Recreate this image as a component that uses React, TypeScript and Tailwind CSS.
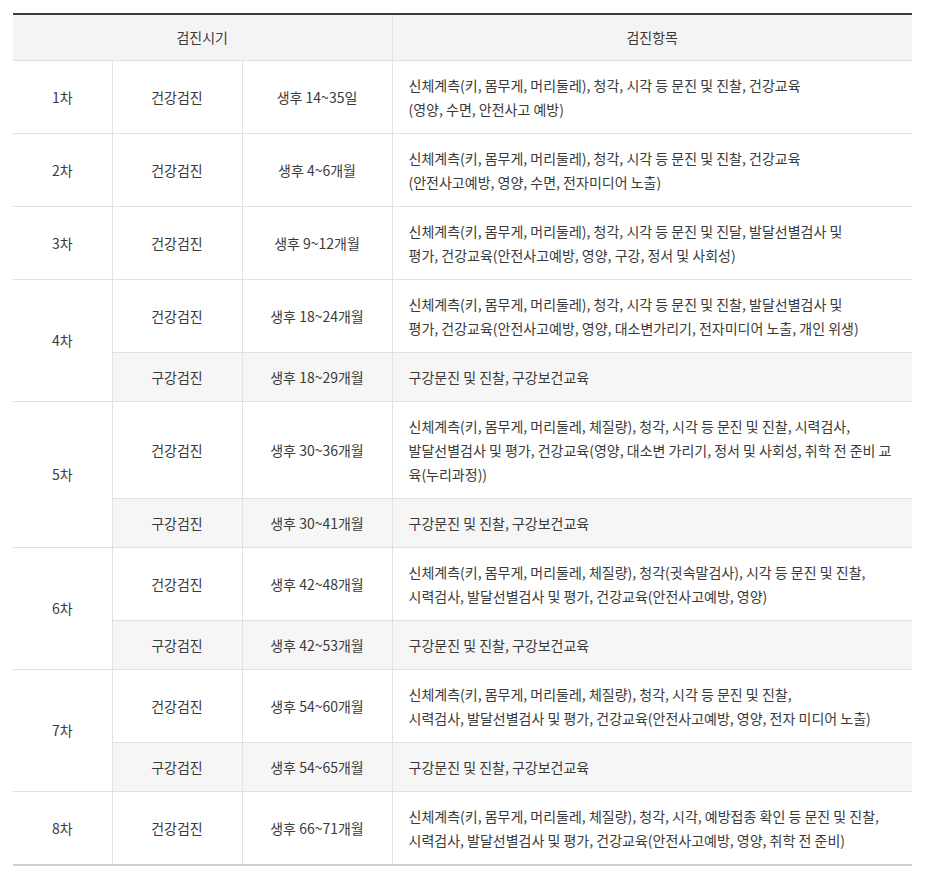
import React from "react";

const font = { fontFamily: '"Noto Sans CJK KR", "Noto Sans", sans-serif' };

type Sub = { kind: string; age: string; lines: string[]; gray?: boolean };
type Row = { no: string; subs: Sub[] };

const rows: Row[] = [
  { no: "1차", subs: [{ kind: "건강검진", age: "생후 14~35일", lines: ["신체계측(키, 몸무게, 머리둘레), 청각, 시각 등 문진 및 진찰, 건강교육", "(영양, 수면, 안전사고 예방)"] }] },
  { no: "2차", subs: [{ kind: "건강검진", age: "생후 4~6개월", lines: ["신체계측(키, 몸무게, 머리둘레), 청각, 시각 등 문진 및 진찰, 건강교육", "(안전사고예방, 영양, 수면, 전자미디어 노출)"] }] },
  { no: "3차", subs: [{ kind: "건강검진", age: "생후 9~12개월", lines: ["신체계측(키, 몸무게, 머리둘레), 청각, 시각 등 문진 및 진달, 발달선별검사 및", "평가, 건강교육(안전사고예방, 영양, 구강, 정서 및 사회성)"] }] },
  {
    no: "4차",
    subs: [
      { kind: "건강검진", age: "생후 18~24개월", lines: ["신체계측(키, 몸무게, 머리둘레), 청각, 시각 등 문진 및 진찰, 발달선별검사 및", "평가, 건강교육(안전사고예방, 영양, 대소변가리기, 전자미디어 노출, 개인 위생)"] },
      { kind: "구강검진", age: "생후 18~29개월", lines: ["구강문진 및 진찰, 구강보건교육"], gray: true },
    ],
  },
  {
    no: "5차",
    subs: [
      { kind: "건강검진", age: "생후 30~36개월", lines: ["신체계측(키, 몸무게, 머리둘레, 체질량), 청각, 시각 등 문진 및 진찰, 시력검사,", "발달선별검사 및 평가, 건강교육(영양, 대소변 가리기, 정서 및 사회성, 취학 전 준비 교", "육(누리과정))"] },
      { kind: "구강검진", age: "생후 30~41개월", lines: ["구강문진 및 진찰, 구강보건교육"], gray: true },
    ],
  },
  {
    no: "6차",
    subs: [
      { kind: "건강검진", age: "생후 42~48개월", lines: ["신체계측(키, 몸무게, 머리둘레, 체질량), 청각(귓속말검사), 시각 등 문진 및 진찰,", "시력검사, 발달선별검사 및 평가, 건강교육(안전사고예방, 영양)"] },
      { kind: "구강검진", age: "생후 42~53개월", lines: ["구강문진 및 진찰, 구강보건교육"], gray: true },
    ],
  },
  {
    no: "7차",
    subs: [
      { kind: "건강검진", age: "생후 54~60개월", lines: ["신체계측(키, 몸무게, 머리둘레, 체질량), 청각, 시각 등 문진 및 진찰,", "시력검사, 발달선별검사 및 평가, 건강교육(안전사고예방, 영양, 전자 미디어 노출)"] },
      { kind: "구강검진", age: "생후 54~65개월", lines: ["구강문진 및 진찰, 구강보건교육"], gray: true },
    ],
  },
  { no: "8차", subs: [{ kind: "건강검진", age: "생후 66~71개월", lines: ["신체계측(키, 몸무게, 머리둘레, 체질량), 청각, 시각, 예방접종 확인 등 문진 및 진찰,", "시력검사, 발달선별검사 및 평가, 건강교육(안전사고예방, 영양, 취학 전 준비)"] }] },
];

export default function App() {
  return (
    <div className="bg-white w-[939px] min-h-[880px] pt-[13px] pl-[13px]" style={font}>
      <table className="w-[899px] border-collapse text-[14px] leading-[24px] text-[#3a3a3a] table-fixed border-t-[2px] border-t-[#3d3d48] border-b-[2px] border-b-[#cfcfcf]">
        <colgroup>
          <col className="w-[99px]" />
          <col className="w-[130px]" />
          <col className="w-[150px]" />
          <col />
        </colgroup>
        <thead>
          <tr className="bg-[#f4f4f5] h-[46px]">
            <th colSpan={3} className="font-normal text-center border-b border-[#e2e2e2] border-r">검진시기</th>
            <th className="font-normal text-center border-b border-[#e2e2e2]">검진항목</th>
          </tr>
        </thead>
        <tbody>
          {rows.map((r) =>
            r.subs.map((s, i) => (
              <tr key={r.no + i} className={s.gray ? "bg-[#f6f6f6]" : "bg-white"}>
                {i === 0 && (
                  <td rowSpan={r.subs.length} className="bg-white text-center border-b border-r border-[#e2e2e2]">
                    {r.no}
                  </td>
                )}
                <td className="text-center border-b border-r border-[#e2e2e2]">{s.kind}</td>
                <td className="text-center border-b border-r border-[#e2e2e2]">{s.age}</td>
                <td className="border-b border-[#e2e2e2] pl-[16px] pr-[10px] py-[12px] whitespace-nowrap">
                  {s.lines.map((l, k) => (
                    <div key={k}>{l}</div>
                  ))}
                </td>
              </tr>
            ))
          )}
        </tbody>
      </table>
    </div>
  );
}
